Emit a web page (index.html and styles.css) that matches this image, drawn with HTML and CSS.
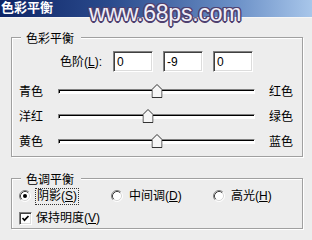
FILE: index.html
```html
<!DOCTYPE html>
<html lang="zh">
<head>
    <meta charset="UTF-8">
    <title>色彩平衡</title>
    <link rel="stylesheet" href="styles.css">
</head>
<body>
    <div class="dialog">
        <div class="titlebar">色彩平衡</div>
        <div class="watermark">www.68ps.com</div>

        <div class="content">
            <div class="group group-balance">
                <span class="group-title">色彩平衡</span>

                <div class="level-row">
                    <span class="level-label">色阶(<u>L</u>):</span>
                    <input class="field" type="text" value="0">
                    <input class="field" type="text" value="-9">
                    <input class="field" type="text" value="0">
                </div>

                <div class="sliders">
                    <div class="slider-row">
                        <span class="side-left">青色</span>
                        <div class="track">
                            <svg class="thumb" style="left: 50%;" width="11" height="14" viewBox="0 0 11 14"><polygon points="0.5,5.5 5.5,0.5 10.5,5.5 10.5,13.5 0.5,13.5" fill="#f6f6f6" stroke="#333"/></svg>
                        </div>
                        <span class="side-right">红色</span>
                    </div>
                    <div class="slider-row">
                        <span class="side-left">洋红</span>
                        <div class="track">
                            <svg class="thumb" style="left: 45.5%;" width="11" height="14" viewBox="0 0 11 14"><polygon points="0.5,5.5 5.5,0.5 10.5,5.5 10.5,13.5 0.5,13.5" fill="#f6f6f6" stroke="#333"/></svg>
                        </div>
                        <span class="side-right">绿色</span>
                    </div>
                    <div class="slider-row">
                        <span class="side-left">黄色</span>
                        <div class="track">
                            <svg class="thumb" style="left: 50%;" width="11" height="14" viewBox="0 0 11 14"><polygon points="0.5,5.5 5.5,0.5 10.5,5.5 10.5,13.5 0.5,13.5" fill="#f6f6f6" stroke="#333"/></svg>
                        </div>
                        <span class="side-right">蓝色</span>
                    </div>
                </div>
            </div>

            <div class="group group-tone">
                <span class="group-title">色调平衡</span>

                <div class="radio-row">
                    <label class="option opt-shadow">
                        <svg class="radio" width="12" height="12" viewBox="0 0 12 12">
                            <circle cx="6" cy="6" r="5" fill="#fff"/>
                            <path d="M9.89 2.11 A5.5 5.5 0 0 0 2.11 9.89" fill="none" stroke="#808080"/>
                            <path d="M9.18 2.82 A4.5 4.5 0 0 0 2.82 9.18" fill="none" stroke="#404040"/>
                            <path d="M9.89 2.11 A5.5 5.5 0 0 1 2.11 9.89" fill="none" stroke="#fff"/>
                            <path d="M9.18 2.82 A4.5 4.5 0 0 1 2.82 9.18" fill="none" stroke="#d8d8d8"/>
                            <circle cx="6" cy="6" r="2" fill="#000"/>
                        </svg>
                        <span class="focus">阴影(<u>S</u>)</span>
                    </label>
                    <label class="option opt-mid">
                        <svg class="radio" width="12" height="12" viewBox="0 0 12 12">
                            <circle cx="6" cy="6" r="5" fill="#fff"/>
                            <path d="M9.89 2.11 A5.5 5.5 0 0 0 2.11 9.89" fill="none" stroke="#808080"/>
                            <path d="M9.18 2.82 A4.5 4.5 0 0 0 2.82 9.18" fill="none" stroke="#404040"/>
                            <path d="M9.89 2.11 A5.5 5.5 0 0 1 2.11 9.89" fill="none" stroke="#fff"/>
                            <path d="M9.18 2.82 A4.5 4.5 0 0 1 2.82 9.18" fill="none" stroke="#d8d8d8"/>
                        </svg>
                        <span class="option-text">中间调(<u>D</u>)</span>
                    </label>
                    <label class="option">
                        <svg class="radio" width="12" height="12" viewBox="0 0 12 12">
                            <circle cx="6" cy="6" r="5" fill="#fff"/>
                            <path d="M9.89 2.11 A5.5 5.5 0 0 0 2.11 9.89" fill="none" stroke="#808080"/>
                            <path d="M9.18 2.82 A4.5 4.5 0 0 0 2.82 9.18" fill="none" stroke="#404040"/>
                            <path d="M9.89 2.11 A5.5 5.5 0 0 1 2.11 9.89" fill="none" stroke="#fff"/>
                            <path d="M9.18 2.82 A4.5 4.5 0 0 1 2.82 9.18" fill="none" stroke="#d8d8d8"/>
                        </svg>
                        <span class="option-text">高光(<u>H</u>)</span>
                    </label>
                </div>

                <label class="check-row">
                    <span class="checkbox">
                        <svg width="9" height="9" viewBox="0 0 9 9"><polyline points="1.5,4 3.5,6.2 7.5,2" fill="none" stroke="#000" stroke-width="1.7"/></svg>
                    </span>
                    <span class="option-text">保持明度(<u>V</u>)</span>
                </label>
            </div>
        </div>
    </div>
</body>
</html>
```

FILE: styles.css
```css
* {
    margin: 0;
    padding: 0;
    box-sizing: border-box;
}

body {
    font-family: 'Liberation Sans', 'Noto Sans CJK SC', sans-serif;
    font-size: 12px;
    line-height: 14px;
    color: #000;
    background: #ededed;
}

.dialog {
    position: relative;
    width: 312px;
    height: 240px;
    background: #ededed;
    overflow: hidden;
}

.titlebar {
    height: 18px;
    padding-left: 1px;
    line-height: 16px;
    font-size: 13px;
    font-weight: 700;
    color: #fff;
    background: linear-gradient(to right, #0e2566 0%, #2a4a8c 35%, #6a8fc6 75%, #a8c6ea 100%);
    border-bottom: 1px solid #f6f6f6;
}

.watermark {
    position: absolute;
    left: 89px;
    top: 2px;
    font-size: 23px;
    line-height: 23px;
    letter-spacing: -0.2px;
    color: #f1eff8;
    text-shadow:
        1.5px 0 0 #4f416f, -1.5px 0 0 #4f416f,
        0 1.5px 0 #4f416f, 0 -1.5px 0 #4f416f,
        1px 1px 0 #4f416f, -1px -1px 0 #4f416f,
        1px -1px 0 #4f416f, -1px 1px 0 #4f416f;
}

.content {
    padding: 19px 9px 0 11px;
}

.group {
    border: 1px solid #a0a0a0;
    box-shadow: inset 1px 1px 0 #fff, 1px 1px 0 #fff;
}

.group-balance {
    height: 120px;
}

.group-tone {
    height: 51px;
    margin-top: 21px;
}

.group-title {
    display: block;
    width: max-content;
    height: 14px;
    margin: -6px 0 0 9px;
    padding: 0 7px 0 5px;
    line-height: 14px;
    background: #ededed;
}

.level-row {
    display: flex;
    align-items: center;
    height: 21px;
    margin: 5px 0 0 48px;
}

.level-label {
    width: 53px;
}

.field {
    width: 40px;
    height: 21px;
    margin-right: 10px;
    padding: 0 3px;
    font-family: inherit;
    font-size: 12px;
    color: #000;
    background: #fff;
    border: 1px solid;
    border-color: #808080 #fff #fff #808080;
    box-shadow: inset 1px 1px 0 #404040, inset -1px -1px 0 #dcdcdc;
    outline: none;
}

.sliders {
    margin-top: 7px;
}

.slider-row {
    display: flex;
    align-items: center;
    height: 25px;
    padding-left: 7px;
}

.side-left {
    width: 24px;
    margin-right: 15px;
}

.side-right {
    margin-left: 14px;
}

.track {
    position: relative;
    width: 197px;
    height: 5px;
    background: #fff;
    border: 1px solid;
    border-color: #808080 #fff #fff #808080;
    box-shadow: inset 1px 1px 0 #000;
}

.thumb {
    position: absolute;
    top: -6px;
    transform: translateX(-50%);
    display: block;
}

.radio-row {
    display: flex;
    align-items: center;
    height: 18px;
    padding-left: 7px;
}

.option {
    display: flex;
    align-items: center;
}

.opt-shadow {
    width: 92px;
}

.opt-mid {
    width: 102px;
}

.radio {
    display: block;
    margin-right: 4px;
}

.focus {
    padding: 0 1px;
    line-height: 15px;
    border: 1px dotted #333;
}

.option-text {
    margin-left: 2px;
}

.check-row {
    display: flex;
    align-items: center;
    height: 18px;
    margin-top: 4px;
    padding-left: 7px;
}

.checkbox {
    display: flex;
    align-items: center;
    justify-content: center;
    width: 13px;
    height: 13px;
    margin-right: 2px;
    background: #fff;
    border: 1px solid;
    border-color: #808080 #fff #fff #808080;
    box-shadow: inset 1px 1px 0 #404040, inset -1px -1px 0 #dcdcdc;
}

u {
    text-decoration: underline;
}
```
